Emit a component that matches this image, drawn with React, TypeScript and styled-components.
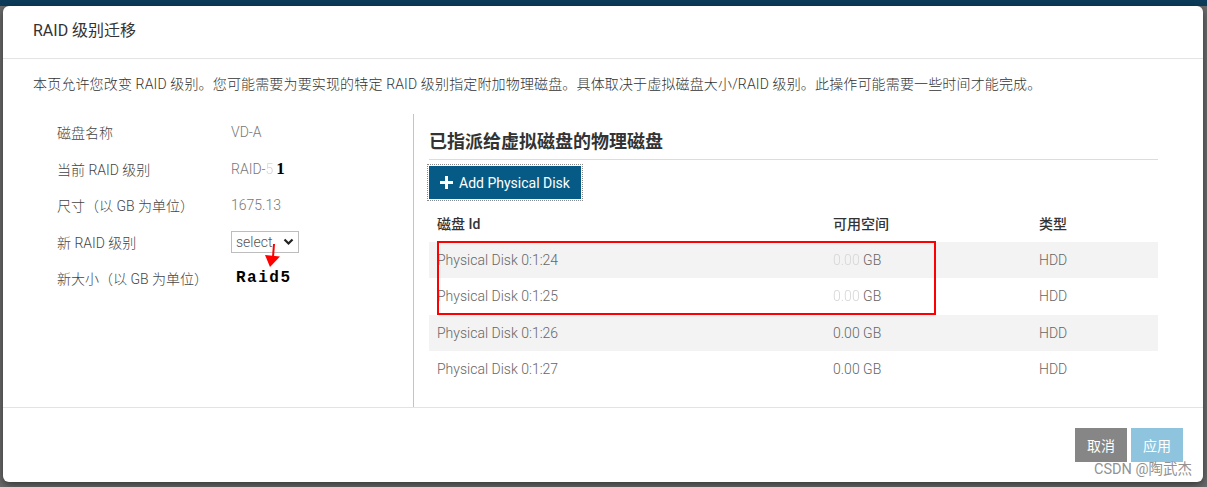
import React from "react";
import styled, { createGlobalStyle } from "styled-components";

const Global = createGlobalStyle`
  html, body { margin: 0; padding: 0; }
  body { font-family: Roboto, "Noto Sans CJK SC", sans-serif; }
  * { box-sizing: border-box; }
`;

const Page = styled.div`
  width: 1207px;
  height: 487px;
  padding: 6px 4px 5px 3px;
  background: linear-gradient(#0c3c5a 0 6px, #6b6b6b 6px);
  overflow: hidden;
`;

const Modal = styled.div`
  background: #fff;
  border-radius: 6px;
  height: 100%;
  display: flex;
  flex-direction: column;
  box-shadow: 0 3px 9px rgba(0, 0, 0, 0.5);
  position: relative;
`;

const Header = styled.div`
  padding: 14px 30px 16px;
  border-bottom: 1px solid #e3e3e3;
`;

const Title = styled.h4`
  margin: 0;
  font-size: 16px;
  line-height: 22px;
  font-weight: 400;
  color: #333;
`;

const Body = styled.div`
  flex: 1;
  display: flex;
  flex-direction: column;
  padding: 15px 30px 0;
`;

const Description = styled.p`
  margin: 0 0 20px;
  font-size: 14px;
  line-height: 20px;
  color: #333;
  font-weight: 300;
  letter-spacing: 0.15px;
`;

const Columns = styled.div`
  flex: 1;
  display: grid;
  grid-template-columns: 380px 1fr;
`;

const LeftCol = styled.div`
  padding-left: 24px;
`;

const InfoRow = styled.div`
  height: 36.5px;
  display: grid;
  grid-template-columns: 174px 1fr;
  align-items: center;
  font-size: 14px;
  position: relative;
`;

const Label = styled.span`
  color: #444;
  font-weight: 300;
`;

const Value = styled.span`
  color: #777;
  font-weight: 300;
  display: flex;
  align-items: center;
`;

const Blurred = styled.span`
  color: #d6d6d6;
  filter: blur(0.7px);
`;

const Scribble = styled.span`
  font-family: "Liberation Serif", serif;
  font-weight: 700;
  font-size: 17px;
  color: #000;
  margin-left: 3px;
`;

const FakeSelect = styled.div`
  width: 68px;
  height: 22px;
  border: 1px solid #bdbdbd;
  display: flex;
  align-items: center;
  justify-content: space-between;
  padding: 0 4px 0 4px;
  color: #555;
  font-size: 14px;
  font-weight: 300;
`;

const Annotation = styled.span`
  font-family: "Liberation Mono", monospace;
  font-weight: 700;
  font-size: 16px;
  letter-spacing: 1.5px;
  color: #000;
  padding-left: 5px;
`;

const Arrow = styled.svg`
  position: absolute;
  left: 205px;
  top: 20px;
  overflow: visible;
`;

const RightCol = styled.div`
  border-left: 1px solid #c4c4c4;
  padding: 0 15px 19px;
  display: flex;
  flex-direction: column;
  align-items: flex-start;
`;

const SectionTitle = styled.h3`
  align-self: stretch;
  margin: 16px 0 0;
  padding-bottom: 5px;
  border-bottom: 1px solid #dcdcdc;
  font-size: 18px;
  line-height: 24px;
  font-weight: 700;
  color: #333;
`;

const AddButton = styled.button`
  margin: 6px 0 6px;
  height: 33px;
  width: 152px;
  border: none;
  outline: 1px dotted #8a8a8a;
  outline-offset: 1px;
  background: #065b86;
  color: #fff;
  font-family: Roboto, sans-serif;
  font-size: 14px;
  display: flex;
  align-items: center;
  gap: 6px;
  padding: 0 11px;
`;

const Table = styled.div`
  align-self: stretch;
  position: relative;
`;

const Row = styled.div<{ $shade?: boolean }>`
  display: grid;
  grid-template-columns: 396px 206px 1fr;
  height: 36.5px;
  align-items: center;
  background: ${(p) => (p.$shade ? "#f3f3f3" : "#fff")};
`;

const Cell = styled.div<{ $head?: boolean }>`
  padding-left: 8px;
  font-size: 14px;
  color: ${(p) => (p.$head ? "#333" : "#666")};
  font-weight: ${(p) => (p.$head ? 500 : 300)};
`;

const RedBox = styled.div`
  position: absolute;
  left: 8px;
  top: 35.5px;
  width: 499px;
  height: 74px;
  border: 2px solid #f00;
  pointer-events: none;
`;

const Footer = styled.div`
  border-top: 1px solid #e3e3e3;
  padding: 20px 20px;
  display: flex;
  justify-content: flex-end;
  gap: 4px;
`;

const FooterButton = styled.button<{ $variant: "cancel" | "apply" }>`
  width: 52px;
  height: 34px;
  border: none;
  color: #fff;
  font-family: "Noto Sans CJK SC", sans-serif;
  font-size: 14px;
  background: ${(p) => (p.$variant === "cancel" ? "#868686" : "#8fc4de")};
`;

const Watermark = styled.span`
  position: absolute;
  right: 11px;
  bottom: 4px;
  font-size: 14.5px;
  line-height: 16px;
  color: #929292;
  font-family: Roboto, "Noto Sans CJK SC", sans-serif;
`;

const disks = [
  { id: "Physical Disk 0:1:24", blur: true },
  { id: "Physical Disk 0:1:25", blur: true },
  { id: "Physical Disk 0:1:26", blur: false },
  { id: "Physical Disk 0:1:27", blur: false },
];

export default function App() {
  return (
    <>
      <Global />
      <Page>
        <Modal>
          <Header>
            <Title>RAID 级别迁移</Title>
          </Header>
          <Body>
            <Description>
              本页允许您改变 RAID 级别。您可能需要为要实现的特定 RAID 级别指定附加物理磁盘。具体取决于虚拟磁盘大小/RAID 级别。此操作可能需要一些时间才能完成。
            </Description>
            <Columns>
              <LeftCol>
                <InfoRow>
                  <Label>磁盘名称</Label>
                  <Value>VD-A</Value>
                </InfoRow>
                <InfoRow>
                  <Label>当前 RAID 级别</Label>
                  <Value>
                    RAID-<Blurred>5</Blurred>
                    <Scribble>1</Scribble>
                  </Value>
                </InfoRow>
                <InfoRow>
                  <Label>尺寸（以 GB 为单位）</Label>
                  <Value>1675.13</Value>
                </InfoRow>
                <InfoRow>
                  <Label>新 RAID 级别</Label>
                  <Value>
                    <FakeSelect>
                      select
                      <svg width="11" height="8" viewBox="0 0 11 8">
                        <path d="M1.5 1.5 L5.5 5.5 L9.5 1.5" fill="none" stroke="#222" strokeWidth="2.2" />
                      </svg>
                    </FakeSelect>
                  </Value>
                  <Arrow width="20" height="26" viewBox="0 0 20 26">
                    <path d="M12 0 L11 13" stroke="#f00" strokeWidth="2" />
                    <path d="M3 11 L18 12.5 L8 23 Z" fill="#f00" />
                  </Arrow>
                </InfoRow>
                <InfoRow>
                  <Label>新大小（以 GB 为单位）</Label>
                  <Annotation>Raid5</Annotation>
                </InfoRow>
              </LeftCol>
              <RightCol>
                <SectionTitle>已指派给虚拟磁盘的物理磁盘</SectionTitle>
                <AddButton>
                  <svg width="13" height="13" viewBox="0 0 13 13">
                    <path d="M6.5 0 V13 M0 6.5 H13" stroke="#fff" strokeWidth="3" />
                  </svg>
                  Add Physical Disk
                </AddButton>
                <Table>
                  <Row>
                    <Cell $head>磁盘 Id</Cell>
                    <Cell $head>可用空间</Cell>
                    <Cell $head>类型</Cell>
                  </Row>
                  {disks.map((d, i) => (
                    <Row key={d.id} $shade={i % 2 === 0}>
                      <Cell>{d.id}</Cell>
                      <Cell>
                        {d.blur ? <Blurred>0.00</Blurred> : "0.00"} GB
                      </Cell>
                      <Cell>HDD</Cell>
                    </Row>
                  ))}
                  <RedBox />
                </Table>
              </RightCol>
            </Columns>
          </Body>
          <Footer>
            <FooterButton $variant="cancel">取消</FooterButton>
            <FooterButton $variant="apply">应用</FooterButton>
          </Footer>
          <Watermark>CSDN @陶武杰</Watermark>
        </Modal>
      </Page>
    </>
  );
}
